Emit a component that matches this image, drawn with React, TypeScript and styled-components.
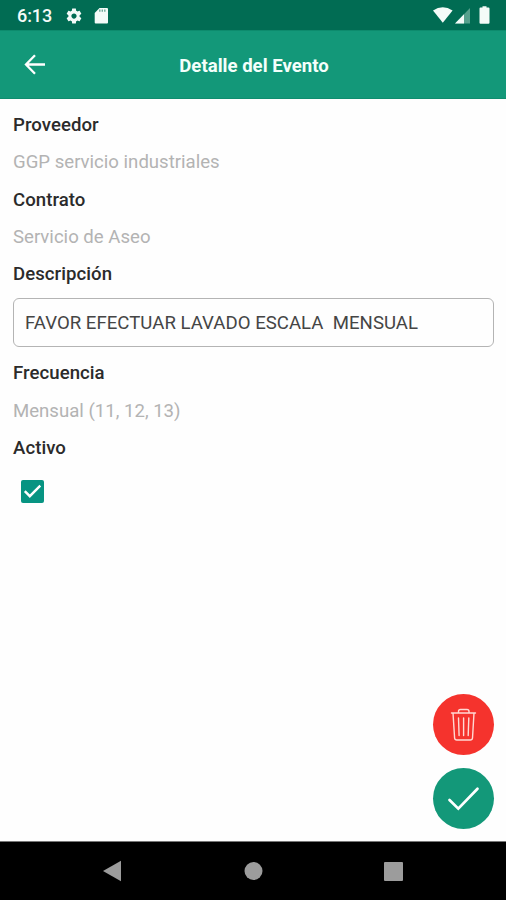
import React from 'react';
import styled, { createGlobalStyle } from 'styled-components';

const GlobalStyle = createGlobalStyle`
  * { box-sizing: border-box; }
  body { margin: 0; background: #fefefe; font-family: Roboto, sans-serif; }
`;

const Screen = styled.div`
  width: 506px;
  height: 900px;
  display: flex;
  flex-direction: column;
  background: #fefefe;
  overflow: hidden;
`;

const StatusBar = styled.div`
  height: 30px;
  flex: none;
  display: flex;
  justify-content: space-between;
  background: #016c53;
  color: #f4fbf8;
`;

const StatusGroup = styled.div<{ $end?: boolean }>`
  display: flex;
  align-items: center;
  padding: ${(p) => (p.$end ? '0 16px 0 0' : '2px 0 0 17px')};
`;

const Clock = styled.span`
  width: 48px;
  font-size: 18px;
  font-weight: 500;
  line-height: 28px;
  letter-spacing: -0.1px;
`;

const Header = styled.header`
  height: 69px;
  flex: none;
  display: grid;
  grid-template-columns: 70px 1fr 70px;
  align-items: center;
  background: #139879;
  border-top: 1px solid #0d8b6d;
  border-bottom: 1px solid #0f8d6f;
`;

const BackButton = styled.button`
  display: flex;
  justify-content: center;
  padding: 0;
  border: 0;
  background: none;
`;

const Title = styled.h1`
  margin: 2px 0 0 2px;
  text-align: center;
  color: #f4fffb;
  font-size: 18.6px;
  font-weight: 700;
  line-height: 24px;
`;

const Content = styled.main`
  flex: 1;
  display: flex;
  flex-direction: column;
  padding: 7px 12px 12px 13px;
`;

const FieldText = styled.div`
  height: 37.3px;
  line-height: 38px;
  font-size: 18.6px;
`;

const Label = styled(FieldText)`
  font-weight: 500;
  color: #2b2b2b;
  letter-spacing: 0.05px;
`;

const Value = styled(FieldText)`
  color: #b3b3b3;
`;

const Input = styled.div`
  height: 49px;
  margin: 6px 0 7px;
  padding-left: 11px;
  border: 1.5px solid #b4b4b4;
  border-radius: 6px;
  line-height: 48px;
  font-size: 18.6px;
  color: #454545;
  white-space: pre;
  letter-spacing: 0.03px;
`;

const Checkbox = styled.div`
  width: 23px;
  height: 23px;
  margin: 13.5px 0 0 8px;
  border-radius: 2px;
  background: #079482;
`;

const Actions = styled.div`
  margin-top: auto;
  align-self: flex-end;
  display: flex;
  flex-direction: column;
  gap: 13px;
`;

const RoundButton = styled.button<{ $color: string }>`
  width: 61px;
  height: 61px;
  padding: 0;
  border: 0;
  border-radius: 50%;
  display: flex;
  background: ${(p) => p.$color};
`;

const NavBar = styled.nav`
  height: 59px;
  flex: none;
  display: flex;
  background: #000;
  border-top: 1px solid #777;
`;

export default function App() {
  return (
    <>
      <GlobalStyle />
      <Screen>
        <StatusBar>
          <StatusGroup>
            <Clock>6:13</Clock>
            <svg width="18" height="18" viewBox="0 0 24 24" fill="currentColor">
              <path d="M19.43 12.98c.04-.32.07-.64.07-.98s-.03-.66-.07-.98l2.11-1.65c.19-.15.24-.42.12-.64l-2-3.46c-.12-.22-.39-.3-.61-.22l-2.49 1c-.52-.4-1.08-.73-1.69-.98l-.38-2.65C14.46 2.18 14.25 2 14 2h-4c-.25 0-.46.18-.49.42l-.38 2.65c-.61.25-1.17.59-1.69.98l-2.49-1c-.23-.09-.49 0-.61.22l-2 3.46c-.13.22-.07.49.12.64l2.11 1.65c-.04.32-.07.65-.07.98s.03.66.07.98l-2.11 1.65c-.19.15-.24.42-.12.64l2 3.46c.12.22.39.3.61.22l2.49-1c.52.4 1.08.73 1.69.98l.38 2.65c.03.24.24.42.49.42h4c.25 0 .46-.18.49-.42l.38-2.65c.61-.25 1.17-.59 1.69-.98l2.49 1c.23.09.49 0 .61-.22l2-3.46c.12-.22.07-.49-.12-.64l-2.11-1.65zM12 15.5c-1.93 0-3.5-1.57-3.5-3.5s1.57-3.5 3.5-3.5 3.5 1.57 3.5 3.5-1.57 3.5-3.5 3.5z" />
            </svg>
            <svg width="26" height="18" viewBox="0 0 26 18">
              <path d="M16.5 .9H24a1 1 0 0 1 1 1v13.600a1 1 0 0 1-1 1H12.700a1 1 0 0 1-1-1V5.900z" fill="currentColor" />
              <path d="M16.800 2.600v2.200M19.300 2.600v2.200M21.800 2.600v2.200" stroke="#6fa999" strokeWidth="1.400" />
            </svg>
          </StatusGroup>
          <StatusGroup $end>
            <svg width="57" height="30" viewBox="0 0 57 30">
              <path d="M0 10.500Q9.800 4 19.600 10.500L9.800 22.800z" fill="currentColor" />
              <path d="M37 8v15.500H22z" fill="#56a18d" />
              <path d="M31 14.200v9.300H22z" fill="currentColor" />
              <path d="M48.500 7.500h2V6.300h4v1.200h2q1 0 1 1v14.200q0 1-1 1h-8q-1 0-1-1V8.500q0-1 1-1z" transform="translate(-1 0)" fill="currentColor" />
            </svg>
          </StatusGroup>
        </StatusBar>
        <Header>
          <BackButton aria-label="Volver">
            <svg width="22" height="22" viewBox="0 0 22 22" fill="none" stroke="#fff" strokeWidth="2.300">
              <path d="M21 10.500H2.500M11 1.300L2 10.500l9 9.200" />
            </svg>
          </BackButton>
          <Title>Detalle del Evento</Title>
        </Header>
        <Content>
          <Label>Proveedor</Label>
          <Value>GGP servicio industriales</Value>
          <Label>Contrato</Label>
          <Value>Servicio de Aseo</Value>
          <Label>Descripción</Label>
          <Input>{'FAVOR EFECTUAR LAVADO ESCALA  MENSUAL'}</Input>
          <Label>Frecuencia</Label>
          <Value>Mensual (11, 12, 13)</Value>
          <Label>Activo</Label>
          <Checkbox role="checkbox" aria-checked="true">
            <svg width="23" height="23" viewBox="0 0 23 23" fill="none" stroke="#fff" strokeWidth="2.400">
              <path d="M3.800 11.200l5 5L19.300 5.700" />
            </svg>
          </Checkbox>
          <Actions>
            <RoundButton $color="#f5332d" aria-label="Eliminar">
              <svg width="61" height="61" viewBox="0 0 61 61" fill="none" stroke="#ffd9d4" strokeWidth="1.400" strokeLinecap="round" strokeLinejoin="round">
                <path d="M18.500 19H42.500M25.500 19v-1.500q0-2 2-2h6.500q2 0 2 2v1.500M20 19l1.600 25q.2 2 2.200 2h13.500q2 0 2.200-2L41 19M25.500 24l.6 17.500M30.600 24V41.500M35.800 24L35.200 41.500" />
              </svg>
            </RoundButton>
            <RoundButton $color="#139879" aria-label="Guardar">
              <svg width="61" height="61" viewBox="0 0 61 61" fill="none" stroke="#fff" strokeWidth="2.700" strokeLinecap="round">
                <path d="M16.500 32l8.800 8.700L44.500 20.700" />
              </svg>
            </RoundButton>
          </Actions>
        </Content>
        <NavBar>
          <svg width="506" height="58" viewBox="0 0 506 58" fill="#9c9c9c">
            <path d="M103 29l18-10.200v20.400z" />
            <circle cx="253.500" cy="29" r="9" />
            <rect x="384" y="20" width="19" height="19" rx="1" />
          </svg>
        </NavBar>
      </Screen>
    </>
  );
}
